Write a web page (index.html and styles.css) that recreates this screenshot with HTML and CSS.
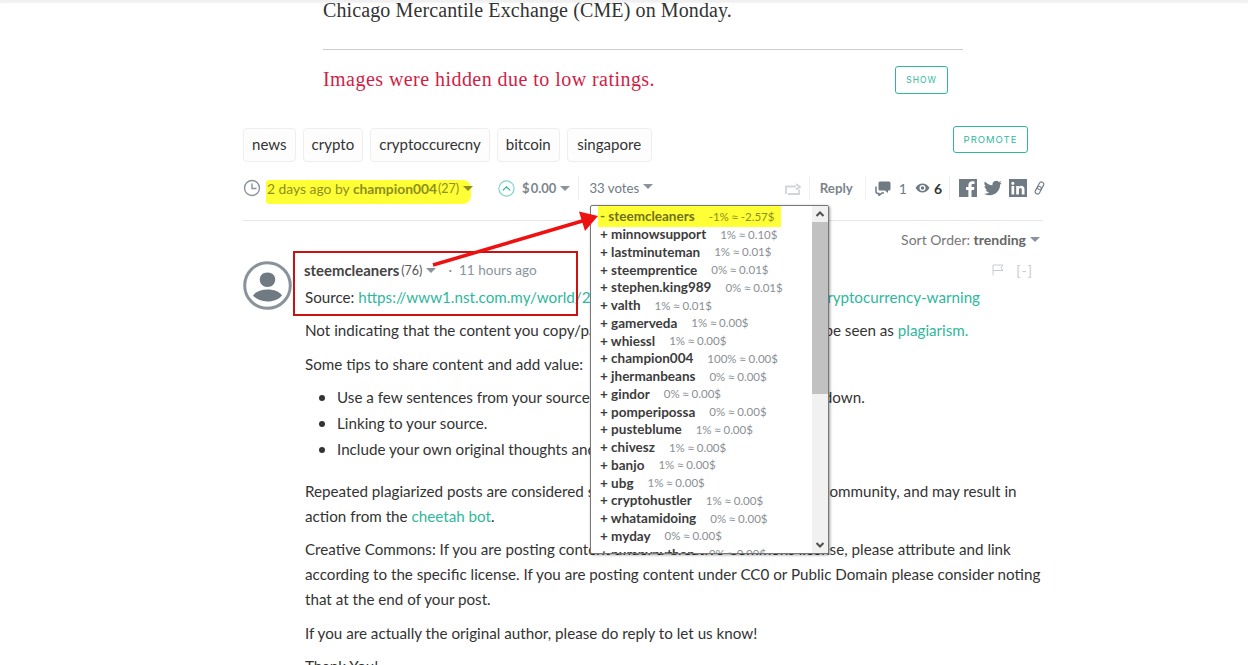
FILE: index.html
```html
<!DOCTYPE html>
<html lang="en">
<head>
<meta charset="utf-8">
<title>Post</title>
<link rel="stylesheet" href="styles.css">
</head>
<body>
<div class="topbar"></div>
<main class="page">
  <section class="article">
    <p class="lede">Chicago Mercantile Exchange (CME) on Monday.</p>
    <hr class="rule">
    <div class="hidden-images">
      <span class="hidden-msg">Images were hidden due to low ratings.</span>
      <button class="btn btn-show">SHOW</button>
    </div>
  </section>

  <div class="tag-row">
    <a class="tag">news</a><a class="tag">crypto</a><a class="tag">cryptoccurecny</a><a class="tag">bitcoin</a><a class="tag tag-last">singapore</a>
    <button class="btn btn-promote">PROMOTE</button>
  </div>

  <div class="meta">
    <svg class="ic-clock" width="18" height="18" viewBox="0 0 18 18"><circle cx="9" cy="9" r="7.500" fill="none" stroke="#8a939b" stroke-width="1.400"/><path d="M9 4.500V9.500H13.500" fill="none" stroke="#8a939b" stroke-width="1.400"/></svg>
    <span class="hl-author"><span class="m-date">2 days ago by </span><b>champion004</b><span class="m-rep">(27)</span><i class="caret"></i></span>
    <svg class="ic-up" width="17" height="17" viewBox="0 0 17 17"><circle cx="8.500" cy="8.500" r="7.600" fill="none" stroke="#7fd4c2" stroke-width="1.200"/><path d="M4.800 10.400L8.500 6.800L12.200 10.400" fill="none" stroke="#2fb79c" stroke-width="1.300"/></svg>
    <span class="m-pay">$ 0.00</span><i class="caret"></i>
    <span class="vdiv d1"></span>
    <span class="m-votes">33 votes</span><i class="caret caret-up"></i>
    <div class="meta-right">
      <svg class="ic-reblog" width="16" height="13" viewBox="0 0 16 13"><path d="M1 12V4.500H11M11 2L15 4.800L11 7.600M14 7.500V12H3" fill="none" stroke="#d2d5d8" stroke-width="1.800"/></svg>
      <span class="vdiv"></span>
      <span class="m-reply">Reply</span>
      <span class="vdiv"></span>
      <svg width="16" height="16" viewBox="0 0 16 16"><path d="M5 1.500H14a1.500 1.500 0 0 1 1.500 1.500V9a1.500 1.500 0 0 1-1.500 1.500H13V13L10 10.500H5A1.500 1.500 0 0 1 3.500 9V3A1.500 1.500 0 0 1 5 1.500Z" fill="#6f7a83"/><path d="M1 6.500V12a2 2 0 0 0 1.500 1.500H4V15.500L7 13H9" fill="none" stroke="#6f7a83" stroke-width="1.500"/></svg>
      <span class="m-count">1</span>
      <svg class="ic-eye" width="15" height="10" viewBox="0 0 15 10"><path d="M.5 5C2.500 1.800 5 .6 7.500 .6S12.500 1.800 14.500 5C12.500 8.200 10 9.400 7.500 9.400S2.500 8.200 .5 5Z" fill="#6f7a83"/><circle cx="7.500" cy="5" r="3" fill="#fff"/><circle cx="7.500" cy="5" r="1.700" fill="#6f7a83"/></svg>
      <span class="m-count dark">6</span>
      <span class="vdiv"></span>
      <svg class="share" width="18" height="18" viewBox="0 0 18 18"><path d="M0 0H18V18H12.500V11H15L15.400 8H12.500V6.300C12.500 5.400 12.800 4.900 14 4.900H15.500V2.300C15 2.200 14.200 2.200 13.300 2.200C11 2.200 9.400 3.500 9.400 6V8H7V11H9.400V18H0Z" fill="#6f7a83"/></svg>
      <svg class="share" width="18" height="18" viewBox="0 0 24 24"><path d="M23.500 4.600c-.9.400-1.800.7-2.800.8 1-.6 1.800-1.500 2.100-2.700-.9.600-2 1-3.100 1.200A4.900 4.900 0 0 0 11.400 8.400 13.900 13.900 0 0 1 1.300 3.300a4.900 4.900 0 0 0 1.500 6.500c-.8 0-1.500-.2-2.200-.6v.1c0 2.400 1.700 4.400 3.900 4.800-.7.200-1.500.2-2.200.1.600 2 2.400 3.400 4.600 3.400A9.800 9.800 0 0 1 0 19.600 13.900 13.900 0 0 0 7.500 21.800c9 0 14-7.500 14-14v-.6c1-.7 1.800-1.600 2-2.600z" fill="#6f7a83"/></svg>
      <svg class="share" width="18" height="18" viewBox="0 0 18 18"><path fill-rule="evenodd" d="M0 0H18V18H0ZM2.500 7V15.500H5.200V7ZM3.850 2.800a1.550 1.550 0 1 0 0 3.100 1.550 1.550 0 0 0 0-3.100ZM7.200 7V15.500H9.900V11C9.900 9.800 10.300 9 11.400 9C12.500 9 12.800 9.900 12.800 11V15.500H15.500V10.500C15.500 8 14.200 6.800 12.300 6.800C11.100 6.800 10.300 7.400 9.900 8.100V7Z" fill="#6f7a83"/></svg>
      <svg class="ic-link" width="11" height="14" viewBox="0 0 11 14"><g fill="none" stroke="#6f7a83" stroke-width="1.100"><rect x="4.300" y=".8" width="4.600" height="8" rx="2.300" transform="rotate(28 6.600 4.800)"/><rect x="2" y="5.200" width="4.600" height="8" rx="2.300" transform="rotate(28 4.300 9.200)"/></g></svg>
    </div>
  </div>
  <hr class="meta-rule">

  <div class="sort">Sort Order: <b>trending</b><i class="caret"></i></div>

  <article class="comment">
    <svg class="avatar" width="49" height="49" viewBox="0 0 49 49"><circle cx="24.500" cy="24.500" r="22.800" fill="#fff" stroke="#8a939b" stroke-width="3"/><path d="M24.500 11.500c4.700 0 7.700 3 7.700 7s-3 7.500-7.700 7.500-7.700-3.300-7.700-7.500 3-7 7.700-7Z" fill="#6f7a83"/><path d="M10 34.500C12.500 30.500 18 28.500 24.500 28.500S36.500 30.500 39 34.500C36 38 31 40.500 24.500 40.500S13 38 10 34.500Z" fill="#6f7a83"/></svg>
    <div class="c-main">
      <div class="c-head">
        <b>steemcleaners</b><span class="c-rep">(76)</span><i class="caret"></i>
        <span class="c-time">·&nbsp;&nbsp;11 hours ago</span>
        <span class="c-tools">
          <svg width="12" height="12" viewBox="0 0 12 12"><path d="M1 11.500V1H11L9 3.800L11 6.500H1" fill="none" stroke="#c8ccd0" stroke-width="1"/></svg>
          <span class="c-collapse">[-]</span>
        </span>
      </div>
      <div class="c-body">
        <p>Source: <a>https://www1.nst.com.my/world/2018/01/32-186/singapore-issues-cryptocurrency-warning</a></p>
        <p>Not indicating that the content you copy/paste is not your original work could be seen as <a>plagiarism.</a></p>
        <p>Some tips to share content and add value:</p>
        <ul>
          <li>Use a few sentences from your source in "quotes." Use HTML tag or Markdown.</li>
          <li>Linking to your source.</li>
          <li>Include your own original thoughts and ideas on what you have read.</li>
        </ul>
        <p>Repeated plagiarized posts are considered spam.&nbsp;&nbsp; Spam is discouraged by the community, and may result in action from the <a>cheetah bot</a>.</p>
        <p>Creative Commons: If you are posting content under a Creative Commons license, please attribute and link according to the specific license. If you are posting content under CC0 or Public Domain please consider noting that at the end of your post.</p>
        <p>If you are actually the original author, please do reply to let us know!</p>
        <p>Thank You!</p>
      </div>
    </div>
  </article>
</main>

<div class="votes-pop">
  <div class="votes-list">
    <div class="v"><span class="hl-vote"><span class="vn">- steemcleaners</span><span class="vp">-1% <i>≈</i> -2.57$</span></span></div>
    <div class="v"><span class="vn">+ minnowsupport</span><span class="vp">1% <i>≈</i> 0.10$</span></div>
    <div class="v"><span class="vn">+ lastminuteman</span><span class="vp">1% <i>≈</i> 0.01$</span></div>
    <div class="v"><span class="vn">+ steemprentice</span><span class="vp">0% <i>≈</i> 0.01$</span></div>
    <div class="v"><span class="vn">+ stephen.king989</span><span class="vp">0% <i>≈</i> 0.01$</span></div>
    <div class="v"><span class="vn">+ valth</span><span class="vp">1% <i>≈</i> 0.01$</span></div>
    <div class="v"><span class="vn">+ gamerveda</span><span class="vp">1% <i>≈</i> 0.00$</span></div>
    <div class="v"><span class="vn">+ whiessl</span><span class="vp">1% <i>≈</i> 0.00$</span></div>
    <div class="v"><span class="vn">+ champion004</span><span class="vp">100% <i>≈</i> 0.00$</span></div>
    <div class="v"><span class="vn">+ jhermanbeans</span><span class="vp">0% <i>≈</i> 0.00$</span></div>
    <div class="v"><span class="vn">+ gindor</span><span class="vp">0% <i>≈</i> 0.00$</span></div>
    <div class="v"><span class="vn">+ pomperipossa</span><span class="vp">0% <i>≈</i> 0.00$</span></div>
    <div class="v"><span class="vn">+ pusteblume</span><span class="vp">1% <i>≈</i> 0.00$</span></div>
    <div class="v"><span class="vn">+ chivesz</span><span class="vp">1% <i>≈</i> 0.00$</span></div>
    <div class="v"><span class="vn">+ banjo</span><span class="vp">1% <i>≈</i> 0.00$</span></div>
    <div class="v"><span class="vn">+ ubg</span><span class="vp">1% <i>≈</i> 0.00$</span></div>
    <div class="v"><span class="vn">+ cryptohustler</span><span class="vp">1% <i>≈</i> 0.00$</span></div>
    <div class="v"><span class="vn">+ whatamidoing</span><span class="vp">0% <i>≈</i> 0.00$</span></div>
    <div class="v"><span class="vn">+ myday</span><span class="vp">0% <i>≈</i> 0.00$</span></div>
    <div class="v"><span class="vn">+ pumpypython</span><span class="vp">0% <i>≈</i> 0.00$</span></div>
  </div>
  <div class="vscroll">
    <svg width="16" height="16" viewBox="0 0 16 16"><path d="M4.500 10L8 6.500L11.500 10" fill="none" stroke="#505050" stroke-width="2"/></svg>
    <div class="vtrack"><div class="vthumb"></div></div>
    <svg width="16" height="16" viewBox="0 0 16 16"><path d="M4.500 6L8 9.500L11.500 6" fill="none" stroke="#505050" stroke-width="2"/></svg>
  </div>
</div>

<div class="redbox"></div>
<svg class="arrow" width="172" height="64" viewBox="0 0 172 64"><path d="M3 60L154 15.500" stroke="#ee1111" stroke-width="3.500" fill="none"/><path d="M168 11L149 6.500L155 26Z" fill="#ee1111"/></svg>
</body>
</html>
```
FILE: styles.css
```css
* { box-sizing: border-box; }
html, body { margin: 0; padding: 0; height: 665px; overflow: hidden; background: #fff; }
body { font-family: Lato, "Liberation Sans", sans-serif; color: #333; font-size: 15.200px; position: relative; }

.topbar { height: 2px; background: #f0f0f0; box-shadow: 0 1px 2px rgba(0,0,0,.06); }

.page { width: 802px; margin-left: 243px; }

.article { width: 720px; padding-left: 80px; }
.lede { font-family: "Liberation Serif", serif; font-size: 20px; letter-spacing: .11px; line-height: 26px; margin: -5px 0 0; color: #333; }
.rule { border: 0; border-top: 1px solid #ccc; margin: 26px 0 0; width: 640px; }
.hidden-images { display: flex; align-items: center; justify-content: space-between; width: 625px; margin-top: 16px; height: 28px; }
.hidden-msg { font-family: "Liberation Serif", serif; font-size: 20px; letter-spacing: .45px; color: #cf1f47; padding-bottom: 2px; }

.btn { background: #fff; border: 1px solid #2fb79c; border-radius: 3px; color: #2fb79c; font-family: Inter, "Liberation Sans", sans-serif; padding: 0; letter-spacing: 1px; }
.btn-show { width: 53px; height: 28px; font-size: 8.500px; }
.btn-promote { width: 75px; height: 27px; font-size: 9.500px; margin-left: auto; margin-right: 17px; margin-top: -2px; align-self: flex-start; }

.tag-row { display: flex; gap: 7px; margin-top: 34px; height: 34px; }
.tag { display: flex; align-items: center; height: 34px; padding: 0 8px 2px; border: 1px solid #eee; border-radius: 4px; background: #fdfdfd; color: #333; font-size: 15.050px; }
.tag-last { padding: 0 9.500px 2px; }

.meta { display: flex; align-items: center; height: 24px; margin-top: 14px; color: #777; font-size: 14px; }
.hl-author { display: flex; align-items: center; height: 24px; margin: 7px 0 0 5px; padding: 0 0 7px 1px; width: 205px; background: #ffff36; border-radius: 3px 8px 8px 3px; color: #8d8d22; white-space: pre; }
.hl-author b { font-size: 13.800px; font-weight: 700; }
.m-date { font-size: 13.850px; }
.m-rep { font-size: 12.500px; margin-left: 1px; }
.caret { display: inline-block; width: 0; height: 0; border: 5px solid transparent; border-top-color: #8a939b; border-bottom: 0; margin-left: 4px; flex: none; }
.caret-up { margin-top: -4px; }
.hl-author .caret { border-top-color: #8d8d22; }
.ic-clock { flex: none; }
.ic-up { margin-left: 27px; flex: none; }
.m-pay { margin-left: 7px; font-size: 13px; font-weight: 700; word-spacing: -2px; color: #7c858c; }
.vdiv { display: inline-block; width: 1px; height: 24px; background: #f1f1f1; flex: none; }
.d1 { margin-left: 8px; }
.m-votes { margin-left: 10px; font-size: 13.200px; color: #6f7a83; }
.meta-right { margin-left: auto; display: flex; align-items: center; gap: 9px; }
.ic-reblog { margin-right: -1px; }
.m-reply { font-size: 13.300px; font-weight: 700; color: #7c858c; margin: 0 3px 0 1px; }
.m-count { color: #6f7a83; margin: 0 -1px 0 -1px; }
.m-count.dark { color: #333; font-weight: 700; margin: 0 -2px 0 -5px; }
.share { margin-left: -2px; }
.ic-link { margin-left: -2px; }
.meta-right .vdiv + svg { margin-left: 0; }

.meta-rule { border: 0; border-top: 1px solid #e6e6e6; margin: 20px 0 0; width: 800px; }

.sort { display: flex; align-items: center; justify-content: flex-end; height: 20px; margin-top: 8px; padding-right: 5px; color: #777; font-size: 14px; white-space: pre; }
.sort b { color: #666; font-weight: 700; }

.comment { display: flex; margin-top: 12px; }
.avatar { flex: none; }
.c-main { margin-left: 13px; width: 738px; }
.c-head { display: flex; align-items: center; height: 20px; margin: -1px 0 0 -1px; font-size: 14px; white-space: pre; }
.c-head b { color: #444; font-size: 14.900px; font-weight: 700; }
.c-rep { color: #555; font-size: 12.500px; margin-left: 2px; }
.c-time { margin-left: 12px; color: #8a939b; font-size: 13.600px; }
.c-tools { margin-left: auto; margin-right: 10px; display: flex; gap: 12px; align-items: center; color: #c8ccd0; }
.c-collapse { letter-spacing: 1px; }
.c-body { margin-top: 4.500px; line-height: 25px; font-size: 15.200px; }
.c-body p { margin: 0 0 8.500px; }
.c-body a { color: #2fb79c; }
.c-body ul { margin: -1px 0 16.500px; padding-left: 32px; line-height: 26px; }
.c-body li::marker { font-size: 1.150em; }

.votes-pop { position: absolute; left: 590px; top: 205px; width: 239px; height: 349px; background: #fff; border: 1px solid #777; border-radius: 2px; box-shadow: 1px 1px 3px rgba(0,0,0,.4); display: flex; overflow: hidden; }
.votes-list { width: 221px; padding: 1.500px 0 0 9px; flex: none; overflow: hidden; }
.v { display: flex; height: 17.750px; align-items: center; white-space: nowrap; font-size: 13.500px; }
.vn { font-weight: 700; color: #3c3c3c; }
.vp { margin-left: 14px; color: #8a8f94; font-size: 11.500px; }
.vp i { font-family: "Noto Sans", sans-serif; font-style: normal; font-size: 11px; }
.hl-vote { display: flex; align-items: center; width: 183px; height: 21px; margin-left: -2px; padding-left: 2px; background: #ffff36; }
.hl-vote .vn { color: #70701a; }
.hl-vote .vp { color: #8d8d22; }
.vscroll { width: 16px; flex: none; background: #f1f1f1; display: flex; flex-direction: column; }
.vscroll svg { flex: none; }
.vtrack { flex: 1; }
.vthumb { height: 172px; background: #c1c1c1; }

.redbox { position: absolute; left: 293px; top: 251px; width: 285px; height: 65px; border: 2px solid #cc1111; }
.arrow { position: absolute; left: 430px; top: 205px; }
```
